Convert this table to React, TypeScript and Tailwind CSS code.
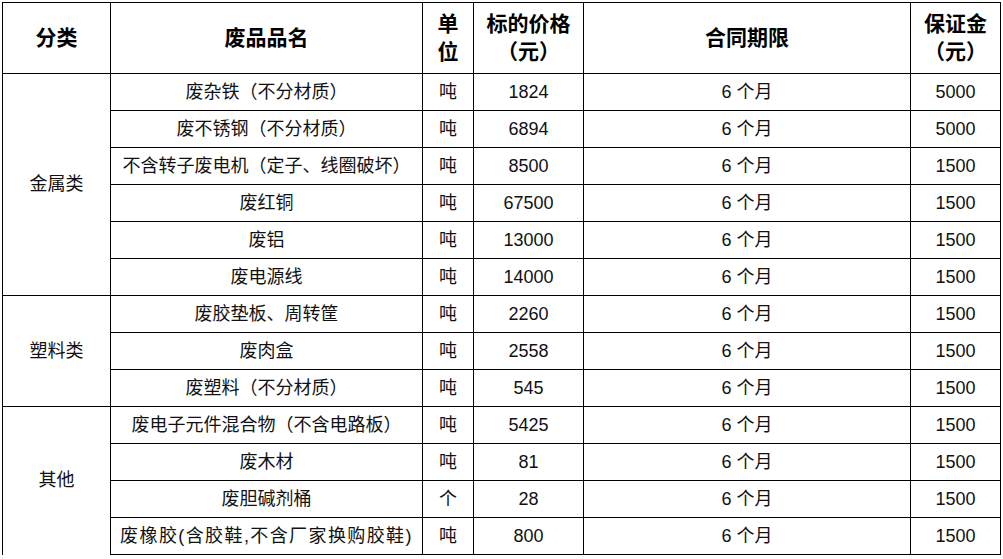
const font = { fontFamily: '"Liberation Sans", "Noto Sans CJK SC", sans-serif' }

type Row = { name: string; unit: string; price: string; term: string; deposit: string; wide?: boolean }

const groups: { category: string; rows: Row[] }[] = [
  {
    category: '金属类',
    rows: [
      { name: '废杂铁（不分材质）', unit: '吨', price: '1824', term: '6 个月', deposit: '5000' },
      { name: '废不锈钢（不分材质）', unit: '吨', price: '6894', term: '6 个月', deposit: '5000' },
      { name: '不含转子废电机（定子、线圈破坏）', unit: '吨', price: '8500', term: '6 个月', deposit: '1500' },
      { name: '废红铜', unit: '吨', price: '67500', term: '6 个月', deposit: '1500' },
      { name: '废铝', unit: '吨', price: '13000', term: '6 个月', deposit: '1500' },
      { name: '废电源线', unit: '吨', price: '14000', term: '6 个月', deposit: '1500' },
    ],
  },
  {
    category: '塑料类',
    rows: [
      { name: '废胶垫板、周转筐', unit: '吨', price: '2260', term: '6 个月', deposit: '1500' },
      { name: '废肉盒', unit: '吨', price: '2558', term: '6 个月', deposit: '1500' },
      { name: '废塑料（不分材质）', unit: '吨', price: '545', term: '6 个月', deposit: '1500' },
    ],
  },
  {
    category: '其他',
    rows: [
      { name: '废电子元件混合物（不含电路板）', unit: '吨', price: '5425', term: '6 个月', deposit: '1500' },
      { name: '废木材', unit: '吨', price: '81', term: '6 个月', deposit: '1500' },
      { name: '废胆碱剂桶', unit: '个', price: '28', term: '6 个月', deposit: '1500' },
      { name: '废橡胶(含胶鞋,不含厂家换购胶鞋)', unit: '吨', price: '800', term: '6 个月', deposit: '1500', wide: true },
    ],
  },
]

const cell = 'border border-black text-center align-middle p-0'

export default function App() {
  return (
    <div className="min-h-[559px] w-[1003px] bg-white pl-[2px] pt-[2px] text-[#111]" style={font}>
      <table className="w-[998px] table-fixed border-collapse">
        <colgroup>
          <col className="w-[108px]" />
          <col className="w-[312px]" />
          <col className="w-[51px]" />
          <col className="w-[110px]" />
          <col className="w-[327px]" />
          <col className="w-[90px]" />
        </colgroup>
        <thead>
          <tr className="h-[71px] text-[21px] font-bold leading-[28px] text-black">
            <th className={cell}>分类</th>
            <th className={cell}>废品品名</th>
            <th className={cell}>
              单<br />位
            </th>
            <th className={cell}>
              标的价格<br />（元）
            </th>
            <th className={cell}>合同期限</th>
            <th className={cell}>
              保证金<br />（元）
            </th>
          </tr>
        </thead>
        <tbody className="text-[18px]">
          {groups.map((g, gi) =>
            g.rows.map((r, i) => (
              <tr key={g.category + i} className="h-[37px]">
                {i === 0 && (
                  <td
                    rowSpan={g.rows.length}
                    className={gi === groups.length - 1 ? `${cell} border-b-0` : cell}
                  >
                    {g.category}
                  </td>
                )}
                <td className={r.wide ? `${cell} whitespace-nowrap tracking-[1.4px]` : `${cell} whitespace-nowrap`}>
                  {r.name}
                </td>
                <td className={cell}>{r.unit}</td>
                <td className={cell}>{r.price}</td>
                <td className={cell}>{r.term}</td>
                <td className={cell}>{r.deposit}</td>
              </tr>
            )),
          )}
        </tbody>
      </table>
    </div>
  )
}
